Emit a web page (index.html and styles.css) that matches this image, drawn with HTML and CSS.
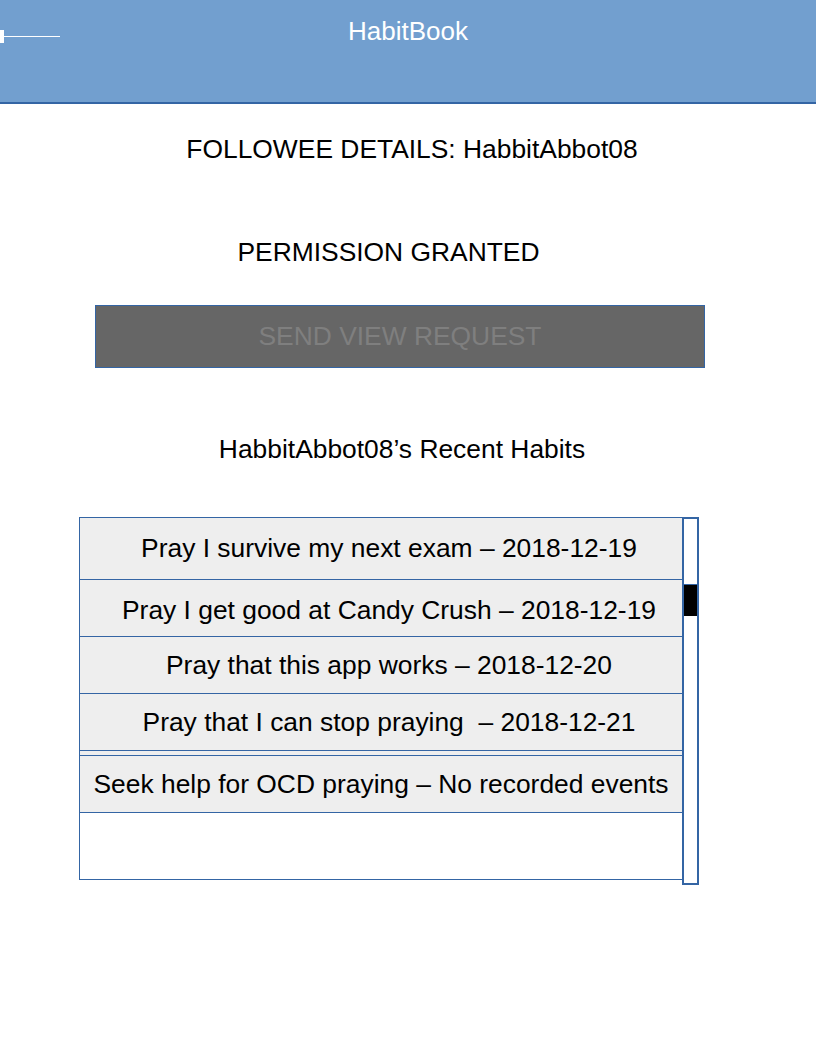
FILE: index.html
```html
<!DOCTYPE html>
<html>
<head>
<meta charset="utf-8">
<title>HabitBook</title>
<link rel="stylesheet" href="styles.css">
</head>
<body>
<header class="appbar">
  <div class="menu-handle"><span class="knob"></span><span class="bar"></span></div>
  <h1 class="app-title">HabitBook</h1>
</header>
<main class="content">
  <h2 class="followee">FOLLOWEE DETAILS: HabbitAbbot08</h2>
  <p class="permission">PERMISSION GRANTED</p>
  <button class="request-btn" disabled>SEND VIEW REQUEST</button>
  <h3 class="habits-title">HabbitAbbot08’s Recent Habits</h3>
  <div class="habit-list">
    <div class="rows">
      <div class="row first indent">Pray I survive my next exam – 2018-12-19</div>
      <div class="row indent second">Pray I get good at Candy Crush – 2018-12-19</div>
      <div class="row indent">Pray that this app works – 2018-12-20</div>
      <div class="row indent">Pray that I can stop praying &nbsp;– 2018-12-21</div>
      <div class="row spacer"></div>
      <div class="row">Seek help for OCD praying – No recorded events</div>
    </div>
    <div class="scrollbar"><div class="thumb"></div></div>
  </div>
</main>
</body>
</html>
```
FILE: styles.css
```css
* { box-sizing: border-box; }
html, body { margin: 0; padding: 0; background: #ffffff; }
body {
  font-family: "Liberation Sans", Arial, sans-serif;
  color: #000;
  width: 816px;
  height: 1056px;
  overflow: hidden;
}
.appbar {
  position: relative;
  height: 104px;
  background: #729fcf;
  border-bottom: 2px solid #3465a4;
  padding-top: 16px;
}
.app-title {
  margin: 0;
  font-weight: normal;
  font-size: 26px;
  line-height: 30px;
  color: #ffffff;
  text-align: center;
}
.menu-handle {
  position: absolute;
  left: 0;
  top: 30px;
  width: 60px;
  height: 13px;
  display: flex;
  align-items: center;
}
.menu-handle .knob {
  width: 4px;
  height: 13px;
  background: #ffffff;
}
.menu-handle .bar {
  flex: 1;
  height: 1.5px;
  background: #ffffff;
}
.content {
  display: flex;
  flex-direction: column;
  align-items: flex-start;
}
.followee, .permission, .habits-title {
  margin: 0;
  font-weight: normal;
  font-size: 26.4px;
  line-height: 30px;
  width: 816px;
  text-align: center;
}
.followee { margin-top: 30px; padding-left: 8px; }
.permission { margin-top: 73px; padding-right: 39px; }
.request-btn {
  margin: 38px 0 0 95px;
  width: 610px;
  height: 63px;
  background: #666666;
  border: 1px solid #3465a4;
  color: #7f7f7f;
  font-family: "Liberation Sans", Arial, sans-serif;
  font-size: 26.4px;
  padding: 0;
}
.habits-title { margin-top: 66px; padding-right: 12px; }
.habit-list {
  margin: 53px 0 0 79px;
  display: flex;
  align-items: flex-start;
}
.rows {
  width: 604px;
  height: 363px;
  border: 1px solid #3465a4;
  background: #ffffff;
}
.row {
  height: 57px;
  border-bottom: 1px solid #3465a4;
  background: #eeeeee;
  display: flex;
  align-items: center;
  justify-content: center;
  font-size: 26.4px;
  white-space: pre;
  padding-top: 0;
}
.row.indent { padding-left: 16px; }
.row.first { height: 62px; }
.row.second { padding-top: 4px; }
.row.spacer { height: 5px; padding: 0; }
.scrollbar {
  width: 17px;
  height: 368px;
  margin-left: -1px;
  border: 2px solid #3465a4;
  background: #ffffff;
  padding-top: 65px;
}
.thumb {
  height: 32px;
  background: #000000;
  border-top: 1px solid #3465a4;
}
```
